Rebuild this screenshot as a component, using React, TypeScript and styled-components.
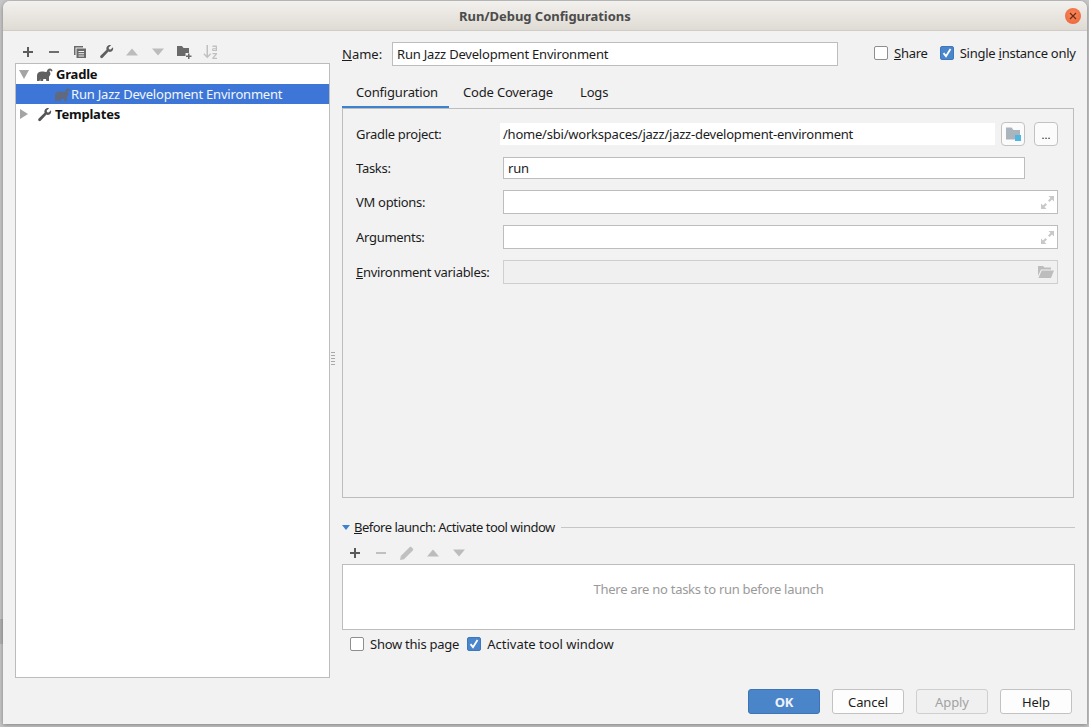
import React from "react";
import styled, { createGlobalStyle } from "styled-components";

const GlobalStyle = createGlobalStyle`
  html, body {
    margin: 0;
    height: 100%;
    overflow: hidden;
  }
  body {
    background: linear-gradient(#b0b0b0, #b0b0b0) 0 619px / 3px 25px no-repeat, #c6c6c6;
    font-family: "Noto Sans", "Open Sans", sans-serif;
    font-size: 13px;
    color: #1c1c1c;
  }
`;

const Dialog = styled.div`
  box-sizing: border-box;
  width: 1084px;
  height: 723px;
  margin: 1px 0 0 3px;
  background: #f2f2f2;
  border-radius: 7px 7px 0 0;
  box-shadow: 0 1px 4px rgba(0, 0, 0, 0.35);
  display: flex;
  flex-direction: column;
`;

const TitleBar = styled.div`
  height: 30px;
  flex: none;
  display: flex;
  align-items: center;
  padding: 0 6px 0 456px;
  border-radius: 7px 7px 0 0;
  border-bottom: 1px solid #d0ccc6;
  box-sizing: border-box;
  background: linear-gradient(#f3f1ee, #dfdbd4);
`;

const TitleText = styled.div`
  flex: 1;
  font-weight: 700;
  font-size: 13px;
  color: #4c4c4c;
  letter-spacing: -0.05px;
`;

const CloseButton = styled.div`
  width: 16px;
  height: 16px;
  border-radius: 50%;
  background: radial-gradient(circle at 50% 40%, #f88a60, #ea5f2f);
  color: #6e2c14;
  display: flex;
  align-items: center;
  justify-content: center;
`;

const Content = styled.div`
  flex: 1;
  display: flex;
  padding: 9px 12px 10px 12px;
  min-height: 0;
`;

const LeftColumn = styled.div`
  width: 315px;
  flex: none;
  display: flex;
  flex-direction: column;
  padding-bottom: 36px;
`;

const IconBar = styled.div<{ $top?: number }>`
  height: 23px;
  flex: none;
  display: flex;
  align-items: center;
  gap: 10px;
  margin-top: ${({ $top }) => $top ?? 0}px;
  padding-left: 5px;
`;

const IconSlot = styled.span`
  width: 16px;
  height: 16px;
  display: flex;
  align-items: center;
  justify-content: center;
`;

const Tree = styled.div`
  flex: 1;
  background: #fff;
  border: 1px solid #bcbcbc;
`;

const TreeRow = styled.div<{ $selected?: boolean; $indent?: number }>`
  height: 20px;
  display: flex;
  align-items: center;
  padding-left: ${({ $indent }) => $indent ?? 2}px;
  background: ${({ $selected }) => ($selected ? "#3d76d6" : "transparent")};
  color: ${({ $selected }) => ($selected ? "#f2f6fd" : "#111")};
`;

const TreeLabel = styled.span<{ $bold?: boolean }>`
  font-weight: ${({ $bold }) => ($bold ? 700 : 400)};
  margin-left: ${({ $bold }) => ($bold ? 3 : 0)}px;
  letter-spacing: ${({ $bold }) => ($bold ? "-0.2px" : "-0.2px")};
  white-space: nowrap;
`;

const Arrow = styled.span<{ $open?: boolean }>`
  width: 0;
  height: 0;
  margin-right: 8px;
  ${({ $open }) =>
    $open
      ? `border-left: 5px solid transparent; border-right: 5px solid transparent; border-top: 9px solid #a4a4a4; margin-left: 1px;`
      : `border-top: 5px solid transparent; border-bottom: 5px solid transparent; border-left: 8px solid #a4a4a4; margin-left: 2px; margin-right: 9px;`}
`;

const Splitter = styled.div`
  width: 12px;
  flex: none;
  display: flex;
  align-items: center;
  padding: 0 0 38px 1px;
  box-sizing: border-box;
`;

const Grip = styled.div`
  width: 4px;
  height: 14px;
  background-image: radial-gradient(circle, #a8a8a8 1px, transparent 1px);
  background-size: 2px 3px;
`;

const RightColumn = styled.div`
  flex: 1;
  min-width: 0;
  display: flex;
  flex-direction: column;
`;

const NameRow = styled.div`
  height: 26px;
  margin-top: 1px;
  flex: none;
  display: flex;
  align-items: center;
`;

const NameLabel = styled.label`
  width: 50px;
  flex: none;
`;

const Mnemonic = styled.span`
  text-decoration: underline;
`;

const TextField = styled.div<{ $disabled?: boolean; $width: number; $height?: number }>`
  box-sizing: border-box;
  height: ${({ $height }) => $height ?? 24}px;
  width: ${({ $width }) => $width}px;
  flex: none;
  background: ${({ $disabled }) => ($disabled ? "#f0f0f0" : "#fff")};
  border: 1px solid ${({ $disabled }) => ($disabled ? "#cfcfcf" : "#bdbdbd")};
  display: flex;
  align-items: center;
  justify-content: space-between;
  padding: 0 3px 0 4px;
  letter-spacing: -0.2px;
  white-space: nowrap;
`;

const NameOptions = styled.div`
  display: flex;
  align-items: center;
  margin-left: 36px;
  padding-bottom: 2px;
`;

const CheckItem = styled.label<{ $gap?: number; $spacing?: number }>`
  display: flex;
  align-items: center;
  gap: 6px;
  margin-right: ${({ $gap }) => $gap ?? 0}px;
  letter-spacing: ${({ $spacing }) => $spacing ?? -0.25}px;
  white-space: nowrap;
`;

const CheckBox = styled.span<{ $checked?: boolean }>`
  box-sizing: border-box;
  width: 14px;
  height: 14px;
  border-radius: 2px;
  flex: none;
  display: flex;
  align-items: center;
  justify-content: center;
  background: ${({ $checked }) => ($checked ? "#4a86cb" : "#fff")};
  border: 1px solid ${({ $checked }) => ($checked ? "#3f78ba" : "#8f8f8f")};
`;

const TabBar = styled.div`
  height: 31px;
  margin-top: 10px;
  flex: none;
  display: flex;
  align-items: stretch;
`;

const Tab = styled.div<{ $active?: boolean; $width: number }>`
  width: ${({ $width }) => $width}px;
  flex: none;
  box-sizing: border-box;
  display: flex;
  align-items: center;
  padding: 1px 0 0 14px;
  letter-spacing: -0.18px;
  white-space: nowrap;
  border-bottom: 2px solid ${({ $active }) => ($active ? "#3d82cf" : "transparent")};
`;

const ConfigPanel = styled.div`
  box-sizing: border-box;
  height: 390px;
  flex: none;
  border: 1px solid #bdbdbd;
  margin-right: 1px;
  padding: 13px 16px 0 13px;
  display: flex;
  flex-direction: column;
  gap: 11px;
`;

const FormRow = styled.div<{ $height?: number }>`
  height: ${({ $height }) => $height ?? 24}px;
  flex: none;
  display: flex;
  align-items: center;
`;

const FormLabel = styled.label`
  width: 147px;
  flex: none;
  letter-spacing: -0.3px;
  white-space: nowrap;
`;

const PathValue = styled.div`
  width: 495px;
  height: 22px;
  flex: none;
  margin-left: -3px;
  padding-left: 3px;
  box-sizing: border-box;
  background: #fff;
  display: flex;
  align-items: center;
  letter-spacing: -0.22px;
  white-space: nowrap;
`;

const SquareButton = styled.div`
  box-sizing: border-box;
  width: 24px;
  height: 24px;
  flex: none;
  background: #fbfbfb;
  border: 1px solid #c2c2c2;
  border-radius: 4px;
  display: flex;
  align-items: center;
  justify-content: center;
  font-size: 11px;
  line-height: 1;
`;

const BrowseRow = styled.div`
  display: flex;
  gap: 9px;
  margin-left: 6px;
`;

const BeforeHeader = styled.div`
  height: 18px;
  margin-top: 20px;
  flex: none;
  display: flex;
  align-items: center;
  letter-spacing: -0.5px;
  white-space: nowrap;
`;

const Disclosure = styled.span`
  width: 0;
  height: 0;
  border-left: 4px solid transparent;
  border-right: 4px solid transparent;
  border-top: 5px solid #3d82cf;
  margin-right: 4px;
`;

const HeaderRule = styled.div`
  flex: 1;
  height: 1px;
  background: #c6c6c6;
  margin-left: 6px;
`;

const TaskBox = styled.div`
  box-sizing: border-box;
  height: 66px;
  flex: none;
  background: #fff;
  border: 1px solid #bdbdbd;
  padding-bottom: 16px;
  display: flex;
  align-items: center;
  justify-content: center;
  color: #9a9a9a;
  letter-spacing: -0.28px;
`;

const OptionsRow = styled.div`
  height: 28px;
  flex: none;
  display: flex;
  align-items: center;
  padding-left: 8px;
`;

const Footer = styled.div`
  margin-top: auto;
  height: 25px;
  flex: none;
  display: flex;
  justify-content: flex-end;
  gap: 12px;
  padding-right: 3px;
`;

const DialogButton = styled.div<{ $variant?: "primary" | "disabled" }>`
  box-sizing: border-box;
  width: 72px;
  height: 25px;
  border-radius: 3px;
  display: flex;
  align-items: center;
  justify-content: center;
  letter-spacing: -0.1px;
  ${({ $variant }) =>
    $variant === "primary"
      ? `background: #4a84c9; border: 1px solid #3f74b4; color: #eef3fa; font-weight: 700;`
      : $variant === "disabled"
        ? `background: #f0f0f0; border: 1px solid #cfcfcf; color: #a2a2a2;`
        : `background: #fdfdfd; border: 1px solid #c2c2c2; color: #1c1c1c;`}
`;

const PlusIcon = ({ color = "#5c5c5c" }: { color?: string }) => (
  <svg width="12" height="12" viewBox="0 0 12 12">
    <path d="M5 1h2v4h4v2H7v4H5V7H1V5h4z" fill={color} />
  </svg>
);

const MinusIcon = ({ color = "#6e6e6e" }: { color?: string }) => (
  <svg width="12" height="12" viewBox="0 0 12 12">
    <path d="M1 5h10v2H1z" fill={color} />
  </svg>
);

const CopyIcon = () => (
  <svg width="14" height="14" viewBox="0 0 14 14">
    <path d="M1 1h9v1.5H2.5V10H1z" fill="#6a6a6a" />
    <path fillRule="evenodd" d="M3.5 3.5H13V13H3.5zM5.5 6v1H11V6zM5.5 8.2v1H11v-1zM5.5 10.4v1H11v-1z" fill="#6a6a6a" />
  </svg>
);

const WrenchIcon = ({ color = "#5f5f5f" }: { color?: string }) => (
  <svg width="15" height="15" viewBox="0 0 15 15">
    <path
      d="M14 3.2c.5 1.700-.1 3.400-1.500 4.200-1 .6-2.100.6-3 .2L3.900 13.600c-.7.7-1.700.7-2.300.1s-.6-1.600.1-2.300l5.900-5.700c-.4-1-.3-2.100.3-3C8.800 1.300 10.500.7 12.100 1.200L9.700 3.500l.3 1.700 1.700.3z"
      fill={color}
    />
  </svg>
);

const UpIcon = ({ color = "#bcbcbc" }: { color?: string }) => (
  <svg width="12" height="8" viewBox="0 0 12 8">
    <path d="M6 .5 12 7.500H0z" fill={color} />
  </svg>
);

const DownIcon = ({ color = "#bcbcbc" }: { color?: string }) => (
  <svg width="12" height="8" viewBox="0 0 12 8">
    <path d="M0 .5h12L6 7.500z" fill={color} />
  </svg>
);

const PencilIcon = () => (
  <svg width="14" height="14" viewBox="0 0 14 14">
    <path d="M0 14l.8-4L9.500 1.200c.6-.6 1.400-.6 2 0l1.300 1.300c.6.6.6 1.400 0 2L4 13.200z" fill="#c0c0c0" />
  </svg>
);

const NewFolderIcon = () => (
  <svg width="15" height="14" viewBox="0 0 15 14">
    <path d="M0 1h5l1.500 2H12v5H8.500v3H0z" fill="#6a6a6a" />
    <path d="M11 8.500h1.500V10.500H14.500V12H12.500v2H11v-2H9v-1.500h2z" fill="#6a6a6a" />
  </svg>
);

const SortIcon = () => (
  <svg width="15" height="16" viewBox="0 0 15 16">
    <path d="M3.500 1h1.500v10.500L7.200 9.300l.9.9L4.200 14.200.4 10.200l.9-.9 2.200 2.200z" fill="#c0c0c0" />
    <path fillRule="evenodd" d="M9.500 1.500h3.500c.6 0 1 .4 1 1V7h-3.600c-.8 0-1.400-.5-1.400-1.300S9.600 4.300 10.400 4.300h2.400V3H9.500zM10.500 5.200c-.3 0-.4.200-.4.500s.100.400.4.400h2.300v-.9z" fill="#c0c0c0" />
    <path d="M9.500 9h4.500v1.200l-3 3.500h3V15H9.300v-1.200l3-3.500H9.500z" fill="#c0c0c0" />
  </svg>
);

const ElephantIcon = ({ color = "#606060" }: { color?: string }) => (
  <svg width="16" height="13" viewBox="0 0 16 13">
    <path
      d="M0 13V7.500C0 5 2 3.500 5 3.500c2 0 3.500.6 4.500.6.5-2 1.800-3.600 3.500-3.600 1.400 0 2.300 1 2.500 2.500l-1.300.5c-.2-.7-.5-1-1-1-.4 0-.7.3-.8.7.9.7 1.200 2 .9 3.200-.3 1-.9 1.500-1.300 2.100V13h-2.700l-.3-1.900H6.300L6 13H3.400l-.2-2.200L2.600 13z"
      fill={color}
    />
  </svg>
);

const CheckMark = () => (
  <svg width="10" height="10" viewBox="0 0 10 10">
    <path d="M1.500 5.200 4 8.200 8.500 1" fill="none" stroke="#fff" strokeWidth="1.800" />
  </svg>
);

const ExpandIcon = () => (
  <svg width="13" height="13" viewBox="0 0 13 13">
    <path d="M7.500 0H13v5.500L11 3.500 8.500 6 7 4.500 9.500 2z M5.500 13H0V7.500L2 9.500 4.500 7 6 8.500 3.500 11z" fill="#c8c8c8" />
  </svg>
);

const OpenFolderIcon = () => (
  <svg width="16" height="12" viewBox="0 0 16 12">
    <path d="M0 0h5l1.500 1.500H13V3.500H3L0 10z" fill="#bdbdbd" />
    <path d="M3.700 4.500H16L13 12H.5z" fill="#bdbdbd" />
  </svg>
);

const ProjectFolderIcon = () => (
  <svg width="16" height="16" viewBox="0 0 16 16">
    <path d="M1 1.500h5.500L8.500 4H15v5H10v4.500H1z" fill="#aab4bc" />
    <path d="M10 9h6v6h-6z" fill="#4fb6e3" />
  </svg>
);

const CloseGlyph = () => (
  <svg width="8" height="8" viewBox="0 0 8 8">
    <path d="M1 1l6 6M7 1 1 7" stroke="currentColor" strokeWidth="1.200" />
  </svg>
);

export default function App() {
  return (
    <>
      <GlobalStyle />
      <Dialog>
        <TitleBar>
          <TitleText>Run/Debug Configurations</TitleText>
          <CloseButton>
            <CloseGlyph />
          </CloseButton>
        </TitleBar>
        <Content>
          <LeftColumn>
            <IconBar>
              <IconSlot><PlusIcon /></IconSlot>
              <IconSlot><MinusIcon /></IconSlot>
              <IconSlot><CopyIcon /></IconSlot>
              <IconSlot><WrenchIcon /></IconSlot>
              <IconSlot><UpIcon /></IconSlot>
              <IconSlot><DownIcon /></IconSlot>
              <IconSlot><NewFolderIcon /></IconSlot>
              <IconSlot><SortIcon /></IconSlot>
            </IconBar>
            <Tree>
              <TreeRow>
                <Arrow $open />
                <ElephantIcon />
                <TreeLabel $bold>Gradle</TreeLabel>
              </TreeRow>
              <TreeRow $selected $indent={39}>
                <ElephantIcon color="#5f6a80" />
                <TreeLabel>Run Jazz Development Environment</TreeLabel>
              </TreeRow>
              <TreeRow>
                <Arrow />
                <WrenchIcon color="#555" />
                <TreeLabel $bold>Templates</TreeLabel>
              </TreeRow>
            </Tree>
          </LeftColumn>
          <Splitter>
            <Grip />
          </Splitter>
          <RightColumn>
            <NameRow>
              <NameLabel>
                <Mnemonic>N</Mnemonic>ame:
              </NameLabel>
              <TextField $width={446}>Run Jazz Development Environment</TextField>
              <NameOptions>
                <CheckItem $gap={12}>
                  <CheckBox />
                  <span><Mnemonic>S</Mnemonic>hare</span>
                </CheckItem>
                <CheckItem>
                  <CheckBox $checked><CheckMark /></CheckBox>
                  <span>Single <Mnemonic>i</Mnemonic>nstance only</span>
                </CheckItem>
              </NameOptions>
            </NameRow>
            <TabBar>
              <Tab $active $width={107}>Configuration</Tab>
              <Tab $width={117}>Code Coverage</Tab>
              <Tab $width={55}>Logs</Tab>
            </TabBar>
            <ConfigPanel>
              <FormRow>
                <FormLabel>Gradle project:</FormLabel>
                <PathValue>/home/sbi/workspaces/jazz/jazz-development-environment</PathValue>
                <BrowseRow>
                  <SquareButton><ProjectFolderIcon /></SquareButton>
                  <SquareButton>...</SquareButton>
                </BrowseRow>
              </FormRow>
              <FormRow $height={22}>
                <FormLabel>Tasks:</FormLabel>
                <TextField $width={522} $height={22}>run</TextField>
              </FormRow>
              <FormRow>
                <FormLabel>VM options:</FormLabel>
                <TextField $width={555}><span /><ExpandIcon /></TextField>
              </FormRow>
              <FormRow>
                <FormLabel>Arguments:</FormLabel>
                <TextField $width={555}><span /><ExpandIcon /></TextField>
              </FormRow>
              <FormRow>
                <FormLabel><Mnemonic>E</Mnemonic>nvironment variables:</FormLabel>
                <TextField $disabled $width={555}><span /><OpenFolderIcon /></TextField>
              </FormRow>
            </ConfigPanel>
            <BeforeHeader>
              <Disclosure />
              <span><Mnemonic>B</Mnemonic>efore launch: Activate tool window</span>
              <HeaderRule />
            </BeforeHeader>
            <IconBar $top={5}>
              <IconSlot><PlusIcon color="#5a5a5a" /></IconSlot>
              <IconSlot><MinusIcon color="#c0c0c0" /></IconSlot>
              <IconSlot><PencilIcon /></IconSlot>
              <IconSlot><UpIcon /></IconSlot>
              <IconSlot><DownIcon /></IconSlot>
            </IconBar>
            <TaskBox>There are no tasks to run before launch</TaskBox>
            <OptionsRow>
              <CheckItem $gap={8} $spacing={-0.25}>
                <CheckBox />
                <span>Show this page</span>
              </CheckItem>
              <CheckItem $spacing={0}>
                <CheckBox $checked><CheckMark /></CheckBox>
                <span>Activate tool window</span>
              </CheckItem>
            </OptionsRow>
            <Footer>
              <DialogButton $variant="primary">OK</DialogButton>
              <DialogButton>Cancel</DialogButton>
              <DialogButton $variant="disabled">Apply</DialogButton>
              <DialogButton>Help</DialogButton>
            </Footer>
          </RightColumn>
        </Content>
      </Dialog>
    </>
  );
}
